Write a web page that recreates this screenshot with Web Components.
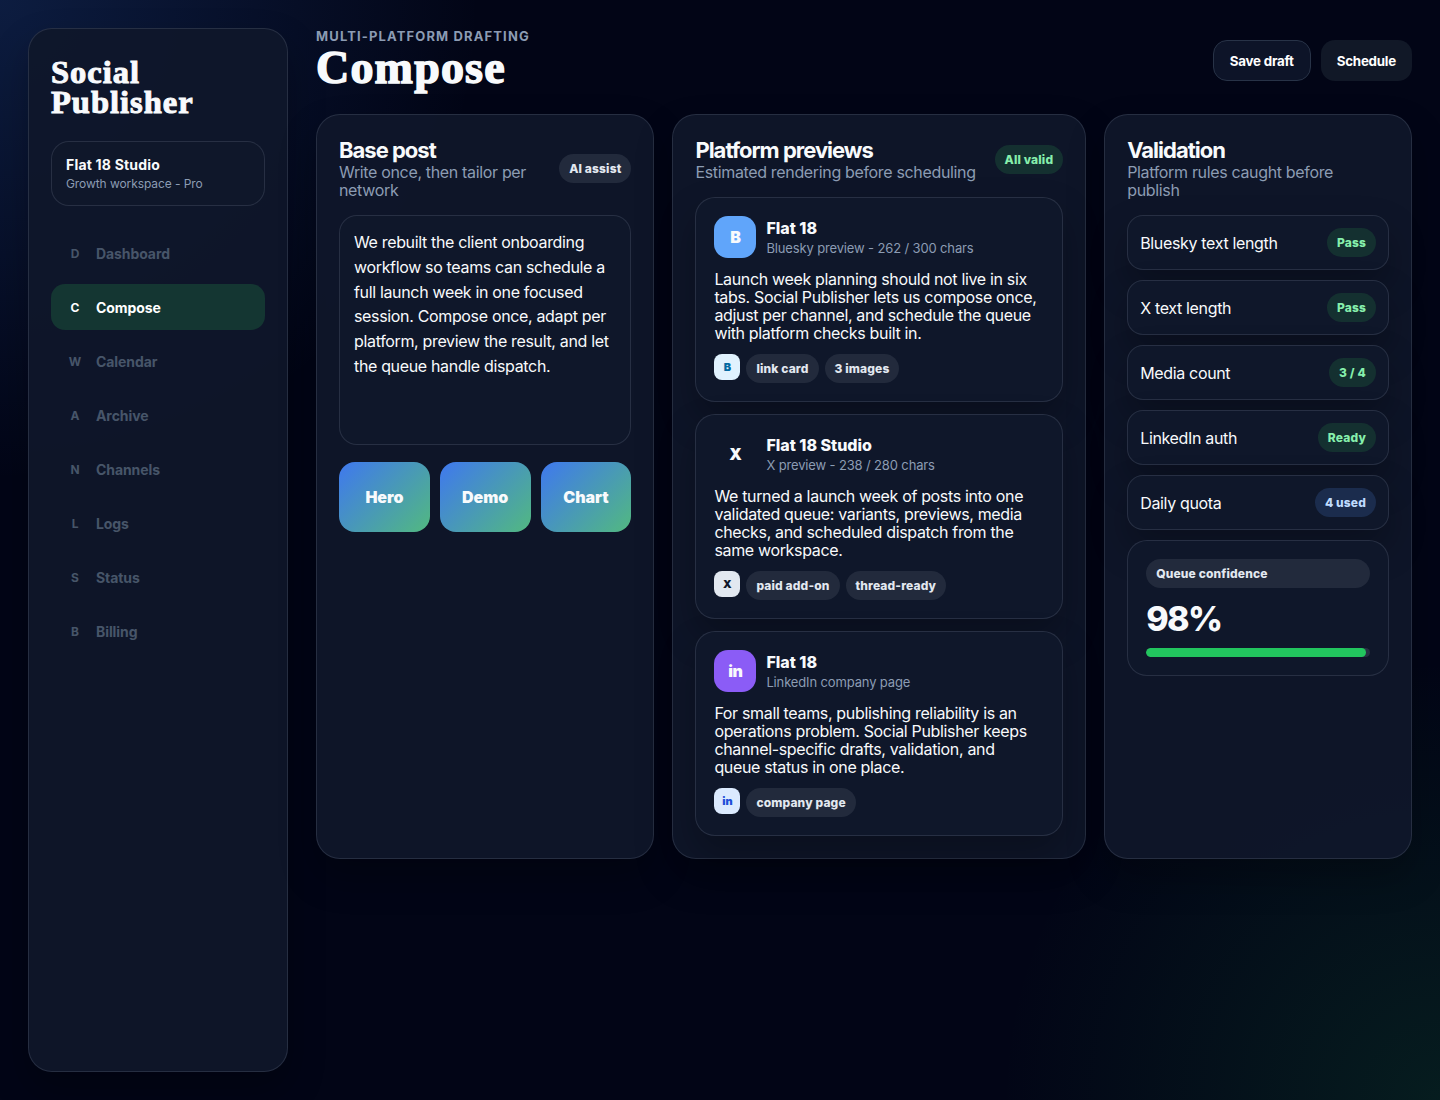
<!DOCTYPE html>
<html lang="en">
<head>
<meta charset="utf-8">
<title>Social Publisher - Compose</title>
<style>
    :root {
        --text: #f8fafc;
        --muted: #8c9cb3;
        --line: rgba(148, 163, 184, 0.18);
        --panel: rgba(15, 23, 42, 0.92);
        --card: #0f172a;
        --shadow: 0 18px 36px rgba(0, 0, 0, 0.26);
    }
    body {
        margin: 0;
        min-height: 1100px;
        box-sizing: border-box;
        padding: 28px;
        display: grid;
        grid-template-columns: 260px minmax(0, 1fr);
        gap: 28px;
        color: var(--text);
        font-family: Inter, "Liberation Sans", sans-serif;
        font-size: 16px;
        line-height: 18px;
        letter-spacing: -0.34px;
        background:
            radial-gradient(circle at 0 0, rgba(59, 130, 246, 0.19), transparent 480px),
            radial-gradient(circle at 100% 100%, rgba(34, 197, 94, 0.12), transparent 440px),
            #020516;
    }
    .columns {
        display: grid;
        grid-template-columns: 338.4px 413.8px 307.8px;
        gap: 18px;
    }
    .tiles {
        display: grid;
        grid-template-columns: repeat(3, 1fr);
        gap: 10px;
        margin-top: 17px;
    }
    .previews { display: grid; gap: 12px; }
    .rules { display: grid; gap: 10px; }
</style>
</head>
<body>
    <app-sidebar>
        <nav-item letter="D">Dashboard</nav-item>
        <nav-item letter="C" active>Compose</nav-item>
        <nav-item letter="W">Calendar</nav-item>
        <nav-item letter="A">Archive</nav-item>
        <nav-item letter="N">Channels</nav-item>
        <nav-item letter="L">Logs</nav-item>
        <nav-item letter="S">Status</nav-item>
        <nav-item letter="B">Billing</nav-item>
    </app-sidebar>

    <main>
        <page-header eyebrow="MULTI-PLATFORM DRAFTING" heading="Compose">
            <action-button outlined>Save draft</action-button>
            <action-button>Schedule</action-button>
        </page-header>

        <div class="columns">
            <panel-card heading="Base post" note="Write once, then tailor per network">
                <status-pill slot="badge">AI assist</status-pill>
                <post-editor>We rebuilt the client onboarding workflow so teams can schedule a full launch week in one focused session. Compose once, adapt per platform, preview the result, and let the queue handle dispatch.</post-editor>
                <div class="tiles">
                    <media-tile>Hero</media-tile>
                    <media-tile>Demo</media-tile>
                    <media-tile>Chart</media-tile>
                </div>
            </panel-card>

            <panel-card heading="Platform previews" note="Estimated rendering before scheduling">
                <status-pill slot="badge" tone="good">All valid</status-pill>
                <div class="previews">
                    <preview-card network="bluesky" letter="B" name="Flat 18" meta="Bluesky preview - 262 / 300 chars">
                        Launch week planning should not live in six tabs. Social Publisher lets us compose once, adjust per channel, and schedule the queue with platform checks built in.
                        <status-pill slot="chips">link card</status-pill>
                        <status-pill slot="chips">3 images</status-pill>
                    </preview-card>
                    <preview-card network="x" letter="X" name="Flat 18 Studio" meta="X preview - 238 / 280 chars">
                        We turned a launch week of posts into one validated queue: variants, previews, media checks, and scheduled dispatch from the same workspace.
                        <status-pill slot="chips">paid add-on</status-pill>
                        <status-pill slot="chips">thread-ready</status-pill>
                    </preview-card>
                    <preview-card network="linkedin" letter="in" name="Flat 18" meta="LinkedIn company page">
                        For small teams, publishing reliability is an operations problem. Social Publisher keeps channel-specific drafts, validation, and queue status in one place.
                        <status-pill slot="chips">company page</status-pill>
                    </preview-card>
                </div>
            </panel-card>

            <panel-card heading="Validation" note="Platform rules caught before publish">
                <div class="rules">
                    <rule-row>Bluesky text length<status-pill slot="state" tone="good">Pass</status-pill></rule-row>
                    <rule-row>X text length<status-pill slot="state" tone="good">Pass</status-pill></rule-row>
                    <rule-row>Media count<status-pill slot="state" tone="good">3 / 4</status-pill></rule-row>
                    <rule-row>LinkedIn auth<status-pill slot="state" tone="good">Ready</status-pill></rule-row>
                    <rule-row>Daily quota<status-pill slot="state" tone="info">4 used</status-pill></rule-row>
                    <confidence-card value="98"></confidence-card>
                </div>
            </panel-card>
        </div>
    </main>

<script>
// Attaches an open shadow root with the given markup
function render(el, html) {
    const template = document.createElement('template');
    template.innerHTML = html;
    el.attachShadow({ mode: 'open' });
    el.shadowRoot.appendChild(template.content.cloneNode(true));
}

class AppSidebar extends HTMLElement {
    constructor() {
        super();
        render(this, `
        <style>
            :host {
                display: block;
                box-sizing: border-box;
                padding: 28px 22px 22px;
                border: 1px solid var(--line);
                border-radius: 24px;
                background: var(--panel);
                box-shadow: var(--shadow);
            }
            h1 {
                margin: 0 0 24px;
                font: bold 32.5px/30px "Liberation Serif", serif;
                letter-spacing: 1px;
                -webkit-text-stroke: 1px currentColor;
            }
            .workspace {
                display: grid;
                gap: 4px;
                padding: 14px;
                border: 1px solid var(--line);
                border-radius: 18px;
                background: var(--card);
            }
            strong { font-size: 14px; line-height: 17px; letter-spacing: 0.2px; }
            small { font-size: 12px; line-height: 14px; letter-spacing: -0.08px; color: var(--muted); }
            nav { display: grid; gap: 8px; margin-top: 24px; }
        </style>
        <h1>Social<br>Publisher</h1>
        <div class="workspace">
            <strong>Flat 18 Studio</strong>
            <small>Growth workspace - Pro</small>
        </div>
        <nav><slot></slot></nav>
        `);
    }
}

class NavItem extends HTMLElement {
    constructor() {
        super();
        render(this, `
        <style>
            :host {
                display: flex;
                align-items: center;
                gap: 11px;
                height: 46px;
                padding: 2px 14px 0;
                box-sizing: border-box;
                border-radius: 14px;
                color: #475569;
                font-size: 14px;
                font-weight: 700;
                letter-spacing: -0.08px;
            }
            :host([active]) { color: #fff; background: #143632; }
            i { width: 20px; font-size: 12px; font-style: normal; text-align: center; }
        </style>
        <i></i><span><slot></slot></span>
        `);
        this.shadowRoot.querySelector('i').append(this.getAttribute('letter'));
    }
}

class PageHeader extends HTMLElement {
    constructor() {
        super();
        render(this, `
        <style>
            :host {
                display: flex;
                justify-content: space-between;
                align-items: center;
                height: 65px;
                margin-bottom: 21px;
            }
            p { margin: 0; padding-top: 1px; font-size: 13px; font-weight: 700; line-height: 15px; letter-spacing: 1.13px; color: var(--muted); }
            h1 {
                margin: 0;
                padding-bottom: 2px;
                font: bold 46px/47px "Liberation Serif", serif;
                letter-spacing: 1.2px;
                -webkit-text-stroke: 1.5px currentColor;
            }
            .actions { display: flex; gap: 10px; }
        </style>
        <div><p></p><h1></h1></div>
        <div class="actions"><slot></slot></div>
        `);
        this.shadowRoot.querySelector('p').append(this.getAttribute('eyebrow'));
        this.shadowRoot.querySelector('h1').append(this.getAttribute('heading'));
    }
}

class ActionButton extends HTMLElement {
    constructor() {
        super();
        render(this, `
        <style>
            button {
                display: block;
                height: 41px;
                padding: 0 16px;
                border: 0;
                border-radius: 14px;
                background: #111827;
                color: #fff;
                font: 700 13.33px Inter, sans-serif;
                letter-spacing: -0.22px;
            }
            :host([outlined]) button { border: 1px solid #283347; background: #0d1428; }
        </style>
        <button><slot></slot></button>
        `);
    }
}

class StatusPill extends HTMLElement {
    constructor() {
        super();
        render(this, `
        <style>
            :host {
                display: block;
                box-sizing: border-box;
                flex: none;
                height: 29px;
                padding: 0 10px;
                border-radius: 15px;
                background: #222a3c;
                color: #e2e8f0;
                font-size: 12px;
                font-weight: 800;
                line-height: 29px;
                letter-spacing: 0.14px;
                white-space: nowrap;
            }
            :host([tone="good"]) { background: #143030; color: #86efac; }
            :host([tone="info"]) { background: #1b2c4d; color: #bfdbfe; }
        </style>
        <slot></slot>
        `);
    }
}

class PanelCard extends HTMLElement {
    constructor() {
        super();
        render(this, `
        <style>
            :host {
                display: block;
                box-sizing: border-box;
                padding: 22px;
                border: 1px solid var(--line);
                border-radius: 24px;
                background: var(--panel);
                box-shadow: var(--shadow);
            }
            header {
                display: flex;
                justify-content: space-between;
                align-items: center;
                gap: 8px;
                margin-bottom: 16px;
            }
            h2 { margin: 0; font-size: 22px; font-weight: 700; line-height: 26px; letter-spacing: -1px; }
            p { margin: 0; padding-right: 4px; color: var(--muted); }
        </style>
        <header>
            <div><h2></h2><p></p></div>
            <slot name="badge"></slot>
        </header>
        <slot></slot>
        `);
        this.shadowRoot.querySelector('h2').append(this.getAttribute('heading'));
        this.shadowRoot.querySelector('p').append(this.getAttribute('note'));
    }
}

class PostEditor extends HTMLElement {
    constructor() {
        super();
        render(this, `
        <style>
            :host {
                display: block;
                box-sizing: border-box;
                height: 230px;
                padding: 14px;
                border: 1px solid var(--line);
                border-radius: 18px;
                background: var(--card);
                line-height: 24.8px;
            }
        </style>
        <slot></slot>
        `);
    }
}

class MediaTile extends HTMLElement {
    constructor() {
        super();
        render(this, `
        <style>
            :host {
                display: grid;
                place-items: center;
                height: 70px;
                border-radius: 16px;
                background: linear-gradient(135deg, #3f78ef, #52b980);
                font-weight: 900;
                letter-spacing: -0.05px;
            }
        </style>
        <span><slot></slot></span>
        `);
    }
}

class PreviewCard extends HTMLElement {
    constructor() {
        super();
        render(this, `
        <style>
            :host {
                display: grid;
                gap: 12px;
                padding: 18px;
                border: 1px solid var(--line);
                border-radius: 20px;
                background: var(--card);
                box-shadow: var(--shadow);
                --avatar: #60a5fa;
                --icon-bg: #e0f2fe;
                --icon: #0369a1;
            }
            :host([network="x"]) { --avatar: transparent; --icon-bg: #e2e8f0; --icon: #0f172a; }
            :host([network="linkedin"]) { --avatar: #8b5cf6; --icon-bg: #dbeafe; --icon: #1d4ed8; }
            .author { display: flex; align-items: center; gap: 10px; }
            .avatar {
                display: grid;
                place-items: center;
                width: 42px;
                height: 42px;
                border-radius: 14px;
                background: var(--avatar);
                font-weight: 900;
            }
            .who { display: grid; gap: 3px; padding-top: 1px; }
            strong { font-weight: 800; line-height: 18px; letter-spacing: 0; }
            small { font-size: 13px; line-height: 16px; letter-spacing: -0.14px; color: var(--muted); }
            p { margin: 0; padding-right: 6px; }
            .chips { display: flex; gap: 6px; align-items: flex-start; }
            .icon {
                display: grid;
                place-items: center;
                width: 26px;
                height: 26px;
                border-radius: 8px;
                background: var(--icon-bg);
                color: var(--icon);
                font-size: 11px;
                font-weight: 900;
                letter-spacing: 0;
            }
        </style>
        <div class="author">
            <div class="avatar"></div>
            <div class="who"><strong></strong><small></small></div>
        </div>
        <p><slot></slot></p>
        <div class="chips"><span class="icon"></span><slot name="chips"></slot></div>
        `);
        const root = this.shadowRoot;
        root.querySelector('.avatar').append(this.getAttribute('letter'));
        root.querySelector('.icon').append(this.getAttribute('letter'));
        root.querySelector('strong').append(this.getAttribute('name'));
        root.querySelector('small').append(this.getAttribute('meta'));
    }
}

class RuleRow extends HTMLElement {
    constructor() {
        super();
        render(this, `
        <style>
            :host {
                display: flex;
                justify-content: space-between;
                align-items: center;
                padding: 12px;
                border: 1px solid var(--line);
                border-radius: 16px;
                background: var(--card);
                box-shadow: var(--shadow);
            }
        </style>
        <span><slot></slot></span>
        <slot name="state"></slot>
        `);
    }
}

class ConfidenceCard extends HTMLElement {
    constructor() {
        super();
        render(this, `
        <style>
            :host {
                display: grid;
                gap: 10px;
                padding: 18px;
                border: 1px solid var(--line);
                border-radius: 20px;
                background: var(--card);
            }
            strong { padding-top: 2px; font-size: 34px; font-weight: 800; line-height: 38px; letter-spacing: -1.6px; }
            .track { height: 9px; border-radius: 9px; overflow: hidden; background: #263042; }
            .fill { height: 9px; border-radius: 9px; background: #22c55e; }
        </style>
        <status-pill>Queue confidence</status-pill>
        <strong></strong>
        <div class="track"><div class="fill"></div></div>
        `);
        const value = this.getAttribute('value') + '%';
        this.shadowRoot.querySelector('strong').append(value);
        this.shadowRoot.querySelector('.fill').style.width = value;
    }
}

customElements.define('app-sidebar', AppSidebar);
customElements.define('nav-item', NavItem);
customElements.define('page-header', PageHeader);
customElements.define('action-button', ActionButton);
customElements.define('status-pill', StatusPill);
customElements.define('panel-card', PanelCard);
customElements.define('post-editor', PostEditor);
customElements.define('media-tile', MediaTile);
customElements.define('preview-card', PreviewCard);
customElements.define('rule-row', RuleRow);
customElements.define('confidence-card', ConfidenceCard);
</script>
</body>
</html>
